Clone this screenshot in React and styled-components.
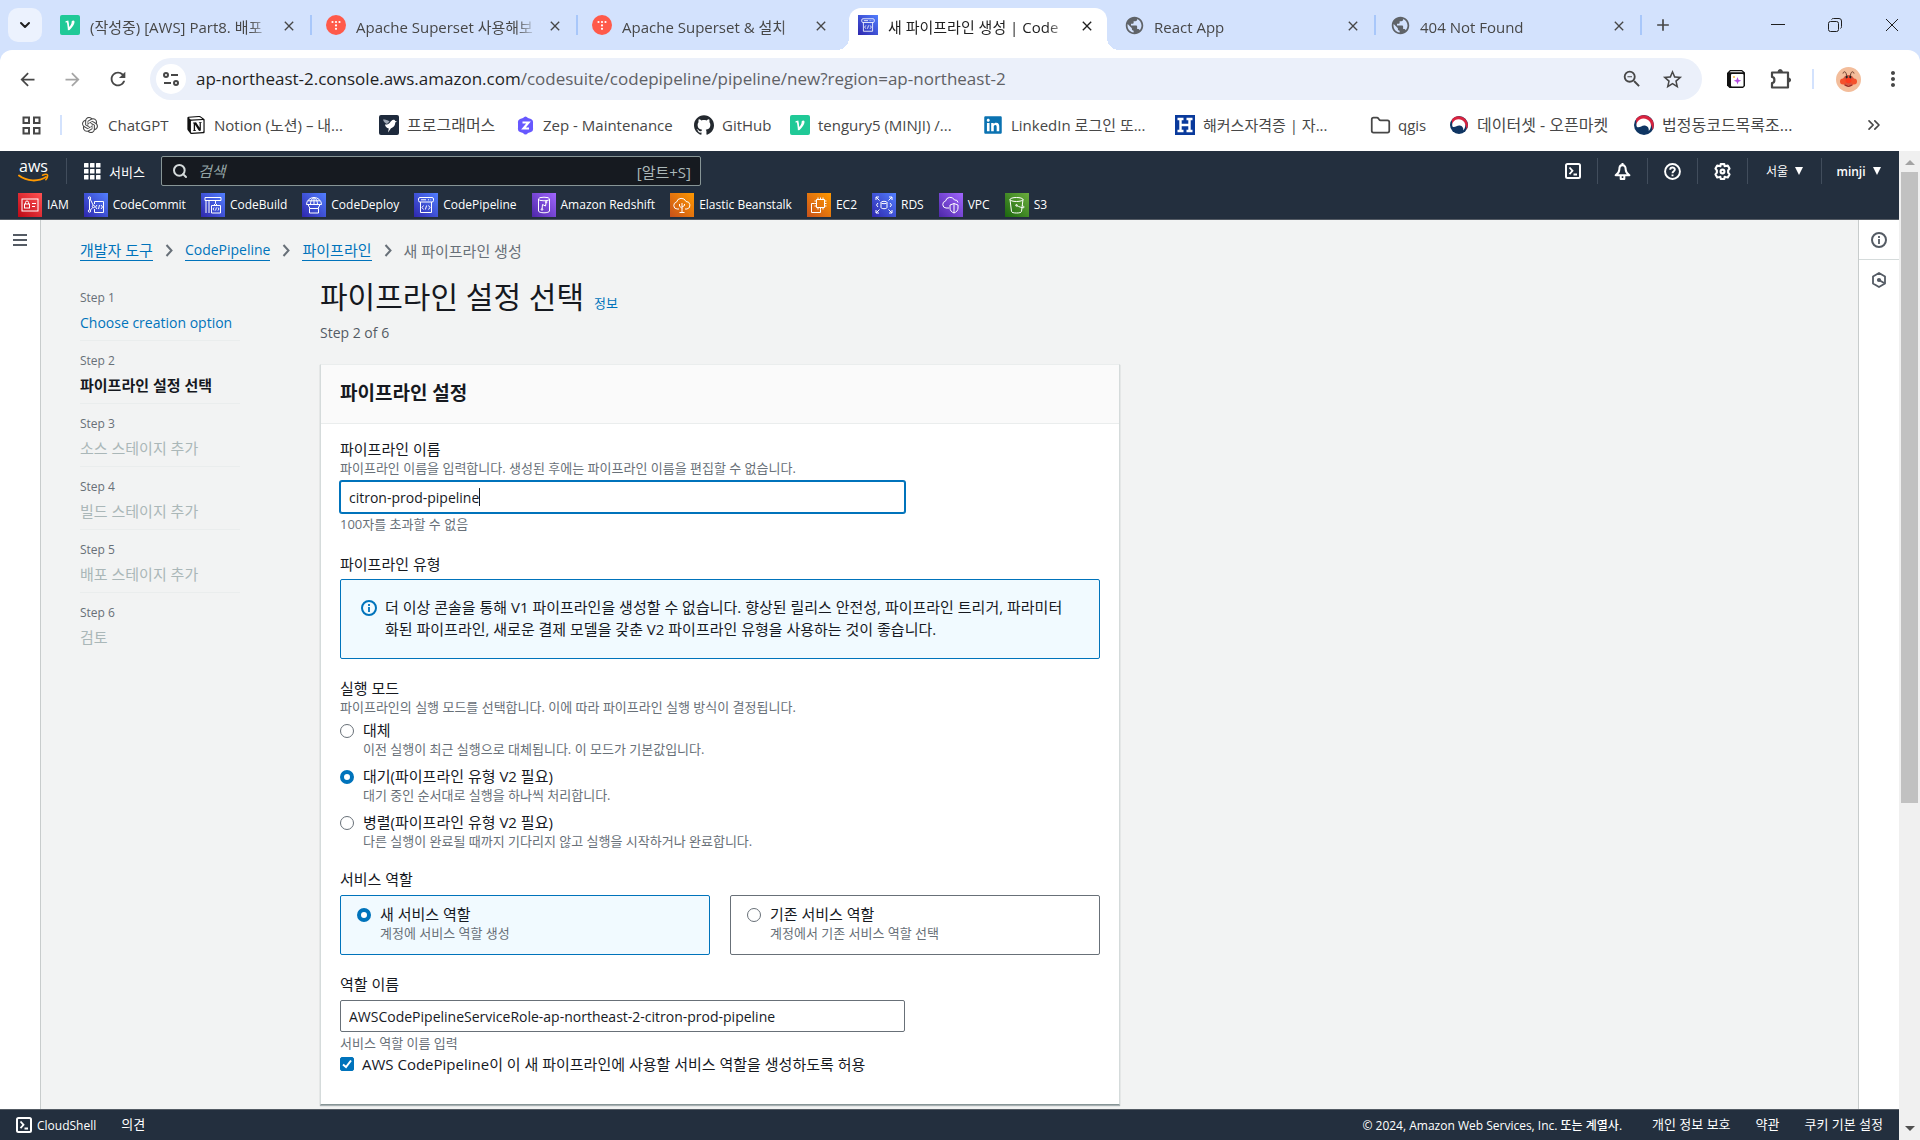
import React, { useState } from "react";
import styled, { createGlobalStyle, css } from "styled-components";
import {
  MdArrowBack, MdArrowForward, MdRefresh, MdStarBorder, MdZoomOut, MdMoreVert,
  MdPublic, MdClose, MdAdd,
} from "react-icons/md";
import { SiOpenai, SiNotion, SiGithub } from "react-icons/si";
import { FaLinkedin } from "react-icons/fa";
import { ChevronDown, ChevronsRight, Folder, Search } from "lucide-react";

const GlobalStyle = createGlobalStyle`
  *, *::before, *::after { box-sizing: border-box; }
  html, body { margin: 0; }
  body {
    font-family: "Open Sans", "Noto Sans CJK KR", sans-serif;
    font-size: 14px;
    color: #16191f;
    background: #f2f3f3;
  }
  button, input { font-family: inherit; }
  button { border: 0; padding: 0; background: none; cursor: pointer; }
  a { text-decoration: none; }
  h1, h2, p, ol, ul, fieldset, legend { margin: 0; padding: 0; border: 0; }
  ol, ul { list-style: none; }
  svg { display: block; flex: none; }
`;

const Window = styled.div`
  display: flex;
  flex-direction: column;
  height: 100vh;
  overflow: hidden;
`;

/* ---------- Browser tabs ---------- */

const TabStrip = styled.header`
  display: flex;
  align-items: center;
  height: 50px;
  flex: none;
  background: #d3e2fd;
  padding-left: 8px;
`;

const TabSearch = styled.button`
  display: grid;
  place-items: center;
  width: 34px;
  height: 34px;
  margin-right: 4px;
  border-radius: 10px;
  background: #ecf2fe;
  color: #1f1f1f;
`;

const Tabs = styled.nav`
  display: flex;
  align-self: stretch;
`;

const Tab = styled.div`
  position: relative;
  display: flex;
  align-items: center;
  gap: 10px;
  width: 266px;
  padding: 0 17px 0 14px;
  color: #474747;
  ${(p) =>
    !p.$active && !p.$beforeActive &&
    css`
      &::after {
        content: "";
        position: absolute;
        right: 0;
        top: 15px;
        width: 2px;
        height: 20px;
        background: #a8c7fa;
      }
    `}
  ${(p) =>
    p.$active &&
    css`
      color: #1f1f1f;
      &::before {
        content: "";
        position: absolute;
        inset: 8px 3px 0 5px;
        background: #fff;
        border-radius: 12px 12px 0 0;
      }
    `}
`;

const TabFoot = styled.span`
  position: absolute;
  bottom: 0;
  width: 12px;
  height: 12px;
  ${(p) => (p.$right ? "right: -9px;" : "left: -7px;")}
  background: radial-gradient(
    circle at ${(p) => (p.$right ? "100%" : "0")} 0,
    #d3e2fd 12px,
    #fff 12px
  );
`;

const TabTitle = styled.span`
  position: relative;
  flex: 1;
  font-size: 15px;
  line-height: 24px;
  padding-top: 3px;
  white-space: nowrap;
  overflow: hidden;
  mask-image: linear-gradient(to right, #000 88%, transparent 100%);
`;

const TabIcon = styled.span`
  position: relative;
  display: grid;
  place-items: center;
  width: 20px;
  color: #5f6368;
`;

const TabClose = styled.button`
  position: relative;
  display: grid;
  place-items: center;
  width: 14px;
  height: 14px;
  color: inherit;
`;

const NewTab = styled.button`
  display: grid;
  place-items: center;
  width: 42px;
  color: #474747;
`;

const WindowButtons = styled.div`
  display: flex;
  align-self: stretch;
  margin-left: auto;
`;

const WindowButton = styled.button`
  display: grid;
  place-items: center;
  width: 57px;
`;

/* ---------- Address bar ---------- */

const ToolbarBack = styled.div`
  background: #d3e2fd;
  flex: none;
`;

const Toolbar = styled.div`
  display: flex;
  align-items: center;
  height: 58px;
  padding: 0 15px;
  background: #fff;
  border-radius: 12px 12px 0 0;
  color: #474747;
`;

const IconButton = styled.button`
  display: grid;
  place-items: center;
  width: ${(p) => p.$w || 45}px;
  height: 32px;
  color: ${(p) => (p.$faded ? "#a5a5a5" : "#474747")};
`;

const NavButtons = styled.div`
  display: flex;
  margin-left: -10px;
`;

const ProfileButtons = styled.div`
  display: flex;
  gap: 19px;
`;

const AddressPill = styled.div`
  display: flex;
  align-items: center;
  flex: 1;
  height: 42px;
  margin-left: 10px;
  margin-right: 16px;
  padding: 0 10px 0 6px;
  border-radius: 21px;
  background: #ebf0fa;
`;

const SiteInfo = styled.button`
  display: grid;
  place-items: center;
  width: 30px;
  height: 30px;
  border-radius: 50%;
  background: #fff;
  color: #474747;
`;

const Url = styled.span`
  flex: 1;
  margin-left: 10px;
  font-size: 17px;
  line-height: 26px;
  color: #5f6165;
  b { font-weight: 400; color: #1f1f1f; }
`;

const Divider = styled.span`
  flex: none;
  width: 2px;
  height: 20px;
  margin: 0 ${(p) => p.$mr || 20}px 0 ${(p) => p.$ml || 20}px;
  background: #d3e2fd;
`;

/* ---------- Bookmarks ---------- */

const Bookmarks = styled.nav`
  display: flex;
  align-items: center;
  flex: none;
  height: 43px;
  padding: 0 36px 9px 22px;
  background: #fff;
  color: #474747;
`;

const Bookmark = styled.a`
  display: flex;
  align-items: center;
  gap: 8px;
  width: ${(p) => p.$w}px;
  flex: none;
  font-size: ${(p) => (p.$korean ? 16 : 15)}px;
  line-height: 22px;
  white-space: nowrap;
  color: #474747;
`;

const BookmarkIcon = styled.span`
  display: grid;
  place-items: center;
  width: 20px;
`;

const More = styled.button`
  margin-left: auto;
  color: #474747;
`;

/* ---------- AWS console ---------- */

const Page = styled.div`
  display: flex;
  flex: 1;
  min-height: 0;
`;

const Console = styled.div`
  display: flex;
  flex-direction: column;
  flex: 1;
  min-width: 0;
`;

const Scrollbar = styled.div`
  display: flex;
  flex-direction: column;
  align-items: center;
  justify-content: space-between;
  width: 21px;
  background: #f0f0f0;
  padding: 9px 0;
`;

const Thumb = styled.div`
  width: 17px;
  flex: 0 1 631px;
  margin: 7px 0 auto;
  background: #c1c1c1;
`;

const Arrow = styled.span`
  border: 5px solid transparent;
  ${(p) =>
    p.$down
      ? "border-top-color: #505050; border-bottom-width: 0;"
      : "border-bottom-color: #a3a3a3; border-top-width: 0;"}
`;

const ConsoleHeader = styled.header`
  flex: none;
  background: #232f3e;
  border-bottom: 1px solid #545b64;
  color: #fff;
`;

const HeaderRow = styled.div`
  display: flex;
  align-items: center;
  height: 40px;
  padding-right: 4px;
  padding-left: 18px;
`;

const HomeLink = styled.a`
  margin-right: 17px;
`;

const HeaderLine = styled.span`
  width: 1px;
  height: 26px;
  background: #414d5c;
`;

const ServicesButton = styled.button`
  display: flex;
  align-items: center;
  gap: 8px;
  width: 94px;
  padding-left: 17px;
  color: #fff;
  font-size: 13px;
  white-space: nowrap;
`;

const SearchBox = styled.label`
  display: flex;
  align-items: center;
  width: 540px;
  height: 30px;
  margin-right: auto;
  padding: 0 9px 0 10px;
  border: 1px solid #879596;
  border-radius: 2px;
  background: #161a20;
  color: #d5dbdb;
  font-size: 14px;
`;

const SearchInput = styled.input`
  flex: 1;
  min-width: 0;
  margin-left: 10px;
  padding: 0;
  border: 0;
  outline: 0;
  background: none;
  color: #fff;
  font-size: 15px;
  &::placeholder { color: #95a5a6; font-style: italic; opacity: 1; }
`;

const Shortcut = styled.span`
  color: #aab7b8;
  font-size: 15px;
`;

const HeaderButton = styled.button`
  display: flex;
  align-items: center;
  justify-content: center;
  gap: 7px;
  width: ${(p) => p.$w || 49}px;
  color: #fff;
  font-size: 12px;
  font-weight: ${(p) => (p.$plain ? 400 : 600)};
  white-space: nowrap;
`;

const Caret = styled.span`
  border: 4px solid transparent;
  border-top: 8px solid #fff;
  border-bottom: 0;
`;

const Favorites = styled.nav`
  display: flex;
  align-items: center;
  gap: 15px;
  height: 28px;
  padding: 0 18px 1px;
`;

const Favorite = styled.a`
  display: flex;
  align-items: center;
  gap: 5px;
  color: #fff;
  font-size: 12px;
  font-weight: 500;
  line-height: 18px;
  white-space: nowrap;
`;

const Body = styled.div`
  display: flex;
  flex: 1;
  min-height: 0;
`;

const SideRail = styled.aside`
  flex: none;
  width: 41px;
  background: #fff;
  color: #545b64;
  border: 0 solid #c8cccc;
  border-width: ${(p) => (p.$right ? "0 0 0 1px" : "0 1px 0 0")};
`;

const RailButton = styled.button`
  display: grid;
  place-items: center;
  width: 100%;
  height: 40px;
  color: #545b64;
  border-bottom: ${(p) => (p.$line ? "1px solid #d5dbdb" : 0)};
`;

const Main = styled.main`
  flex: 1;
  min-width: 0;
  padding: 19px 40px 0 39px;
  overflow: hidden;
  background: #f2f3f3;
`;

const Breadcrumbs = styled.ol`
  display: flex;
  align-items: center;
  gap: 12px;
  height: 22px;
  color: #687078;
  font-size: 15px;
  li { display: flex; align-items: center; gap: 12px; }
`;

const Crumb = styled.a`
  font-size: ${(p) => (p.$latin ? 14 : 15)}px;
  line-height: 20px;
  color: #0073bb;
  border-bottom: 1px solid #0073bb;
`;

const Wizard = styled.div`
  display: grid;
  grid-template-columns: 160px minmax(0, 800px);
  column-gap: 80px;
  margin-top: 16px;
`;

const Steps = styled.ol`
  padding-top: 11px;
`;

const Step = styled.li`
  height: 63px;
  padding-top: 10px;
  &:not(:last-child) { border-bottom: 1px solid #eaeded; }
  &:first-child { height: 53px; padding-top: 0; }
  small {
    display: block;
    font-size: 12px;
    line-height: 20px;
    color: #687078;
  }
`;

const StepName = styled.span`
  display: block;
  margin-top: ${(p) => (p.$latin ? 4 : 3)}px;
  font-size: ${(p) => (p.$latin ? 14 : 15)}px;
  line-height: 22px;
  font-weight: ${(p) => (p.$current ? 700 : 400)};
  color: ${(p) => (p.$current ? "#16191f" : "#aab7b8")};
  white-space: nowrap;
  a { color: #0073bb; }
`;

const TitleRow = styled.div`
  display: flex;
  align-items: baseline;
  gap: 10px;
`;

const Title = styled.h1`
  font-size: 30px;
  line-height: 40px;
  font-weight: 400;
`;

const InfoLink = styled.a`
  font-size: 13px;
  color: #0073bb;
`;

const StepCount = styled.p`
  margin-top: 5px;
  font-size: 14px;
  line-height: 22px;
  color: #545b64;
`;

const Panel = styled.section`
  margin-top: 20px;
  background: #fff;
  border: 1px solid #d5dbdb;
  border-top-color: #eaeded;
  border-bottom-color: #879596;
  box-shadow: 0 1px 1px rgba(0, 28, 36, 0.3);
`;

const PanelTitle = styled.h2`
  height: 59px;
  padding: 14px 19px;
  background: #fafafa;
  border-bottom: 1px solid #eaeded;
  font-size: 19px;
  line-height: 28px;
  font-weight: 700;
`;

const Form = styled.form`
  display: flex;
  flex-direction: column;
  gap: 19px;
  padding: 15px 19px 30px;
`;

const Group = styled.fieldset`
  min-width: 0;
`;

const Label = styled.label`
  display: block;
  font-size: 15px;
  line-height: 20px;
`;

const Hint = styled.span`
  display: block;
  font-size: 13px;
  line-height: ${(p) => (p.$tall ? 22 : 18)}px;
  color: #687078;
`;

const InputWrap = styled.div`
  position: relative;
  width: 565px;
  max-width: 100%;
  margin-top: 4px;
  ${Label} + & { margin-top: 6px; }
`;

const TextInput = styled.input`
  display: block;
  width: 100%;
  height: 32px;
  padding: 0 8px;
  border: 1px solid ${(p) => (p.$focused ? "#0073bb" : "#687078")};
  border-radius: 2px;
  outline: 0;
  box-shadow: ${(p) => (p.$focused ? "0 0 0 1px #0073bb" : "none")};
  font-size: 14px;
  color: #16191f;
  background: #fff;
`;

const TextCursor = styled.span`
  position: absolute;
  left: 9px;
  top: 7px;
  height: 18px;
  font-size: 14px;
  line-height: 18px;
  color: transparent;
  border-right: 1px solid #16191f;
  pointer-events: none;
  &::before { content: attr(data-value); }
`;

const Alert = styled.div`
  display: flex;
  gap: 8px;
  height: 80px;
  margin-top: 5px;
  padding: 16px 20px;
  border: 1px solid #0073bb;
  border-radius: 2px;
  background: #f1faff;
  font-size: 15px;
  line-height: 22px;
  svg { margin-top: 4px; color: #0073bb; }
`;

const Options = styled.div`
  display: flex;
  flex-direction: column;
  gap: 8px;
  margin-top: 4px;
`;

const Choice = styled.label`
  display: grid;
  grid-template-columns: 14px 1fr;
  column-gap: 9px;
  font-size: 15px;
  line-height: 20px;
`;

const Radio = styled.input`
  appearance: none;
  width: 14px;
  height: 14px;
  margin: 4px 0 0;
  border: 1px solid #687078;
  border-radius: 50%;
  background: #fff;
  &:checked { border: 4px solid #0073bb; }
`;

const Tiles = styled.div`
  display: grid;
  grid-template-columns: 1fr 1fr;
  gap: 20px;
  margin-top: 6px;
`;

const Tile = styled.div`
  height: 60px;
  padding: 8px 16px;
  border: 1px solid ${(p) => (p.$on ? "#0073bb" : "#687078")};
  border-radius: 2px;
  background: ${(p) => (p.$on ? "#f1faff" : "#fff")};
`;

const Check = styled.label`
  display: flex;
  align-items: center;
  gap: 8px;
  font-size: 15px;
  line-height: 20px;
`;

const Checkbox = styled.input`
  appearance: none;
  width: 14px;
  height: 14px;
  margin: 0;
  border-radius: 2px;
  border: 1px solid #687078;
  &:checked {
    border-color: #0073bb;
    background: #0073bb
      url("data:image/svg+xml,%3Csvg xmlns='http://www.w3.org/2000/svg' viewBox='0 0 12 12'%3E%3Cpath d='M2 6.5 5 9l5-6.5' fill='none' stroke='%23fff' stroke-width='2'/%3E%3C/svg%3E");
  }
`;

const Footer = styled.footer`
  display: flex;
  align-items: center;
  flex: none;
  height: 31px;
  padding: 0 16px;
  gap: 25px;
  background: #232f3e;
  border-top: 1px solid #545b64;
  color: #fff;
  font-size: 12px;
  white-space: nowrap;
  a { color: #fff; font-size: 13px; line-height: 18px; padding-bottom: 2px; }
`;

const ShellButton = styled.button`
  display: flex;
  align-items: center;
  gap: 5px;
  color: #fff;
  font-size: 12px;
  font-weight: 500;
`;

const Copyright = styled.span`
  margin-left: auto;
  margin-right: 5px;
  font-weight: 500;
`;

/* ---------- Drawings ---------- */

const VelogIcon = () => (
  <svg width="20" height="20" viewBox="0 0 20 20">
    <rect width="20" height="20" rx="2" fill="#20c997" />
    <path d="M5.6 6.3 8.3 5.5c.5 1.900.8 4.200.9 6.600 1.600-1.900 2.400-3.500 2.400-4.700 0-1.200.600-1.900 1.600-1.900 2.700 0 1.300 5-3.600 9.500L7.900 15.200c-.2-3.400-.6-5.900-1.200-7.900l-1.300.1z" fill="#fff" />
  </svg>
);

const TistoryIcon = () => (
  <svg width="20" height="20" viewBox="0 0 20 20">
    <circle cx="10" cy="10" r="10" fill="#ff5a4a" />
    <g fill="#fff">
      <circle cx="6.500" cy="7" r="1.100" /><circle cx="10" cy="7" r="1.100" /><circle cx="13.500" cy="7" r="1.100" />
      <circle cx="10" cy="10.400" r="1.100" /><circle cx="10" cy="13.800" r="1.100" />
    </g>
  </svg>
);

const GLYPHS = {
  iam: (
    <>
      <rect x="4" y="6" width="16" height="12" />
      <rect x="6.500" y="11" width="5" height="4" />
      <path d="M7.500 11V9.500a1.500 1.500 0 0 1 3 0V11M14 10.500h4M14 13.500h3" />
    </>
  ),
  commit: (
    <>
      <path d="M10.500 11V8.500h9v11h-9V16" />
      <path d="m13 12-1.500 2 1.500 2M17 12l1.500 2-1.500 2M15.500 12l-1 4" />
      <circle cx="5.500" cy="5" r="1.200" /><circle cx="5.500" cy="18" r="1.200" /><circle cx="9.500" cy="13.500" r="1.200" />
      <path d="M5.500 6.200v10.600M6.200 6l3 6.300M6.300 17.200l2.400-2.700" />
    </>
  ),
  build: (
    <>
      <path d="M4 4.500h16v3H4zM5 7.500V20M8 7.500V20M14.500 7.500v3" />
      <path d="M10.500 12.500h9V20h-9zM12.500 12.500l2-2 2 2" />
      <path d="m13 14.500-1 1.500 1 1.500M17 14.500l1 1.500-1 1.500M15.400 14.500l-.8 3" />
    </>
  ),
  deploy: (
    <>
      <path d="M4.500 11.500a7.500 7 0 0 1 15 0zM8.500 11.500c0-3 1-6 3.500-7 2.500 1 3.500 4 3.500 7M12 4.500v7M6 7.800h12" />
      <path d="m6 11.500 2 4M18 11.500l-2 4M7.500 15.500h9V20h-9z" />
    </>
  ),
  pipeline: (
    <>
      <rect x="4.500" y="4.500" width="15" height="4.500" rx="1.500" />
      <path d="M6.500 9v10.500h11V9M7 6.800h5M14 6.800h1M16.500 6.800h.6" />
      <path d="m9.500 12.500-1.500 2 1.500 2M14.500 12.500l1.500 2-1.500 2M12.600 12.500l-1.200 4" />
    </>
  ),
  redshift: (
    <>
      <ellipse cx="12" cy="6" rx="5.500" ry="1.800" />
      <path d="M6.500 6v12c0 1 2.500 1.800 5.500 1.800s5.500-.8 5.500-1.800V6M10 16.500l.5-5 3 1.500.7-4.500" />
      <circle cx="10" cy="16.500" r=".8" /><circle cx="14.200" cy="9" r=".8" />
    </>
  ),
  beanstalk: (
    <>
      <path d="M9 16H7a3.500 3.500 0 0 1-.5-6.900A5 5 0 0 1 16 8.500 3.800 3.800 0 0 1 17 16h-2" />
      <path d="M12 10v9M12 15.500 9.500 13v-2M12 14l2.500-1.500V11M9.500 19.500h5" />
    </>
  ),
  ec2: (
    <>
      <path d="M9.500 6.500h8v8h-8zM11 4.500v2M13.500 4.500v2M16 4.500v2M11 14.500v2M13.500 14.500v2M16 14.500v2M7.500 8h2M7.500 10.500h2M7.500 13h2M17.500 8h2M17.500 10.500h2M17.500 13h2" />
      <path d="M7.500 10.500h-3v9h9v-3" />
    </>
  ),
  rds: (
    <>
      <path d="M4 7V4h3M4 4l3.500 3.500M17 4h3v3M20 4l-3.500 3.500M4 17v3h3M4 20l3.500-3.500M17 20h3v-3M20 20l-3.500-3.500" />
      <ellipse cx="12" cy="9.500" rx="3" ry="1.200" />
      <path d="M9 9.500v5c0 .7 1.300 1.200 3 1.200s3-.5 3-1.200v-5M6 10l-1.500 2L6 14M18 10l1.500 2-1.500 2" />
    </>
  ),
  vpc: (
    <>
      <path d="M10 15H7a3.500 3.500 0 0 1-.5-6.900A4.800 4.800 0 0 1 15.500 7a3 3 0 0 1 3.500 2.500" />
      <path d="m15 10.500 4 1.500v3c0 2.500-1.500 4-4 5-2.500-1-4-2.500-4-5v-3zM15 10.500V20" />
    </>
  ),
  s3: (
    <>
      <ellipse cx="11.500" cy="6.500" rx="6.500" ry="2" />
      <path d="m5 6.500 1.500 12c.3 1 2.300 1.500 5 1.500s4.700-.5 5-1.500L18 6.500M11.500 12.500c3 1.500 7.500 3.200 7.500 1.700 0-.8-1-1.500-2-2" />
      <circle cx="11.500" cy="12.300" r=".8" />
    </>
  ),
};

const GRADIENTS = {
  red: ["#bd0816", "#ff5252"],
  blue: ["#2e27ad", "#527fff"],
  purple: ["#4d27a8", "#a166ff"],
  orange: ["#c8511b", "#ff9900"],
  green: ["#1b660f", "#6cae3e"],
};

const ServiceIcon = ({ glyph, tone, size = 24 }) => {
  const id = `g-${glyph}-${size}`;
  return (
    <svg width={size} height={size} viewBox="0 0 24 24">
      <defs>
        <linearGradient id={id} x1="0" y1="1" x2="1" y2="0">
          <stop offset="0" stopColor={GRADIENTS[tone][0]} />
          <stop offset="1" stopColor={GRADIENTS[tone][1]} />
        </linearGradient>
      </defs>
      <rect width="24" height="24" fill={`url(#${id})`} />
      <g fill="none" stroke="#fff" strokeWidth="1">{GLYPHS[glyph]}</g>
    </svg>
  );
};

const AwsLogo = () => (
  <svg width="31" height="30" viewBox="0 -5 31 30">
    <text x="15.500" y="11" textAnchor="middle" fontSize="16" fontWeight="500" fill="#fff" fontFamily="Open Sans">aws</text>
    <path d="M1 14.500c8 6 19 6.500 27 1.500" fill="none" stroke="#ff9900" strokeWidth="2" strokeLinecap="round" />
    <path d="M24.500 14.200c2-.8 4.500-.9 5-.3s-.2 3.200-1.700 4.900" fill="none" stroke="#ff9900" strokeWidth="1.500" strokeLinecap="round" />
  </svg>
);

const ShellIcon = ({ size = 16 }) => (
  <svg width={size} height={size} viewBox="0 0 16 16" fill="none" stroke="currentColor" strokeWidth="2">
    <rect x="1" y="1" width="14" height="14" rx="1.500" />
    <path d="m4.500 4.500 3 3.300-3 3.300M8.500 11.500H12" strokeWidth="1.800" />
  </svg>
);

const BellIcon = () => (
  <svg width="17" height="17" viewBox="0 0 16 16" fill="none" stroke="currentColor" strokeWidth="1.900" strokeLinejoin="round">
    <path d="M8 0v2M8 2C5.500 2 5 4.500 5 6c0 2.500-1.500 4-3.500 5.500h13C12.500 10 11 8.500 11 6c0-1.500-.5-4-3-4zM6.300 12v3h3.400v-3" />
  </svg>
);

const HelpIcon = () => (
  <svg width="17" height="17" viewBox="0 0 16 16" fill="none" stroke="currentColor" strokeWidth="1.800">
    <circle cx="8" cy="8" r="7" />
    <path d="M5.800 6.300C5.900 3.500 10.200 3.600 10.200 6.200 10.200 7.800 8 7.700 8 9.700M8 10.800v1.700" />
  </svg>
);

const GearIcon = () => (
  <svg width="17" height="17" viewBox="0 0 16 16" fill="none" stroke="currentColor" strokeWidth="2" strokeLinejoin="round">
    <path d="M6.300 1h3.400l.3 2 1-.2 2-.3 1.600 2.700L13.300 7v2l1.300 1.800-1.600 2.700-2-.3-1-.2-.3 2H6.300L6 13l-1 .2-2 .3-1.600-2.700L2.700 9V7L1.400 5.200 3 2.500l2 .3 1 .2z" />
    <circle cx="8" cy="8" r="1.800" />
  </svg>
);

const InfoIcon = () => (
  <svg width="16" height="16" viewBox="0 0 16 16" fill="none" stroke="currentColor" strokeWidth="2">
    <circle cx="8" cy="8" r="7" />
    <path d="M8 7v5M8 4v2" strokeWidth="1.800" />
  </svg>
);

const HexIcon = () => (
  <svg width="16" height="16" viewBox="0 0 16 16" fill="none" stroke="currentColor" strokeWidth="1.800" strokeLinejoin="round">
    <path d="m8 1 6 3.500v7L8 15l-6-3.500v-7z" />
    <path d="m8 8 5.500 3.300" /><circle cx="8" cy="8" r="1.200" fill="currentColor" />
  </svg>
);

const CrumbArrow = () => (
  <svg width="8" height="13" viewBox="0 0 8 13" fill="none" stroke="#687078" strokeWidth="2">
    <path d="m1.500 1 5 5.500-5 5.500" />
  </svg>
);

const DotsIcon = () => (
  <svg width="17" height="17" viewBox="0 0 17 17" fill="currentColor">
    {[0, 6, 12].map((y) => [0, 6, 12].map((x) => <rect key={`${x}-${y}`} x={x} y={y} width="4.500" height="4.500" rx=".5" />))}
  </svg>
);

const AppsIcon = () => (
  <svg width="19" height="19" viewBox="0 0 19 19" fill="none" stroke="#474747" strokeWidth="2">
    <path d="M1.500 1.500h5.500v5.500H1.500zM12 1.500h5.500v5.500H12zM1.500 12h5.500v5.500H1.500zM12 12h5.500v5.500H12z" />
  </svg>
);

const TuneIcon = () => (
  <svg width="18" height="18" viewBox="0 0 18 18" fill="none" stroke="currentColor" strokeWidth="2">
    <circle cx="4" cy="5" r="2" /><path d="M9 5h7M2 13h7" /><circle cx="14" cy="13" r="2" />
  </svg>
);

const CrossIcon = () => (
  <svg width="14" height="14" viewBox="0 0 14 14" stroke="#1f1f1f" fill="none"><path d="m1 1 12 12M13 1 1 13" /></svg>
);

const NotionBox = () => (
  <svg width="20" height="20" viewBox="0 0 20 20">
    <path d="m1 4 3-3h12l3 2.500V17l-2 2H3.500L1 16.500z" fill="#111" />
    <path d="m3.500 3.300 1.200-1h10.800l1.500 1z" fill="#fff" />
    <rect x="5" y="5" width="12.500" height="12.500" rx="1" fill="#fff" />
    <path d="m11.500 8 1 2.800 2.800 1-2.800 1-1 2.800-1-2.800-2.800-1 2.800-1z" fill="#b44be0" />
    <circle cx="8" cy="8" r="1" fill="#f4b740" />
  </svg>
);

const PuzzleIcon = () => (
  <svg width="22" height="22" viewBox="0 0 22 22" fill="none" stroke="currentColor" strokeWidth="2.200" strokeLinejoin="round">
    <path d="M2 4.500h16v15H2v-4.300c3.200-.4 3.200-5.900 0-6.300z" />
    <path d="M8 3.800a2.200 2.200 0 0 1 4.400 0zM18.600 10a2 2 0 0 1 0 4z" fill="currentColor" strokeWidth="1" />
  </svg>
);

const Avatar = () => (
  <svg width="25" height="25" viewBox="0 0 25 25">
    <circle cx="12.500" cy="12.500" r="12.500" fill="#f3bd9b" />
    <path d="M10.500 8C10 4 7.500 4 7 6.500M14.500 8c.5-4 3-4 3.500-1.500" fill="none" stroke="#6b3b2a" />
    <circle cx="12.500" cy="14" r="6" fill="#d9573f" />
    <circle cx="7" cy="14.500" r="3" fill="#f4512c" /><circle cx="18" cy="14.500" r="3" fill="#f4512c" />
    <ellipse cx="10.700" cy="10" rx="1" ry="1.800" fill="#222" /><ellipse cx="14.300" cy="10" rx="1" ry="1.800" fill="#222" />
    <circle cx="12.500" cy="13.500" r="2.800" fill="#ff3b1f" />
    <path d="M9 18q3.500 3 7 0" stroke="#842a2a" fill="none" />
  </svg>
);

const ProgrammersIcon = () => (
  <svg width="20" height="20" viewBox="0 0 20 20">
    <rect width="20" height="20" rx="2" fill="#1e2a3c" />
    <path d="M6 9.500c2 .3 3.500-.3 5-2 1-1.200 2-2.700 3.500-2.700 1 0 1.500.5 1.700 1.200l1.800.5-1.800 1c0 3.500-2.200 5.200-4.200 5.700L9 17.500l.8-4C7.500 13 6.300 11.500 6 9.500z" fill="#fff" />
    <path d="M4 4.500c2.500 0 4.500.5 6.500 2L8 9C6 8 4.500 6.500 4 4.500z" fill="#9fa8b5" />
  </svg>
);

const ZepIcon = () => (
  <svg width="17" height="19" viewBox="0 0 17 19">
    <path d="M6 2q2.500-3 5 0l3 1q2.500 1 2 4v5q.5 3-2 4l-3 1q-2.500 3-5 0l-3-1Q.5 15 1 12V7Q.5 4 3 3z" fill="#6758ff" />
    <path d="M5.500 6.500h6l-5 6h5.500" fill="none" stroke="#fff" strokeWidth="2.200" />
  </svg>
);

const HackersIcon = () => (
  <svg width="20" height="20" viewBox="0 0 20 20">
    <rect width="20" height="20" fill="#0a3a9c" />
    <path d="M2.500 4h6M2.500 16h6M11.500 4h6M11.500 16h6M5.500 4v12M14.500 4v12M5.500 10h9" stroke="#fff" strokeWidth="2.400" />
  </svg>
);

const TaegukIcon = ({ size }) => (
  <svg width={size} height={size} viewBox="0 0 20 20">
    <circle cx="10" cy="10" r="10" fill="#0f3562" />
    <path d="M2 4A10 10 0 0 1 18.500 15.200C18 10 15.500 4.500 10 4.500S3 8 2.500 10z" fill="#d9233f" />
    <path d="M3 7.500C6 2 13 2.500 16 7c1.800 3 1 6.500-1.200 9 .3-3-1-5-3.800-5.500-3-.6-5 2.500-8 1.500-.8-1-.7-3 0-4.500z" fill="#fff" />
  </svg>
);

/* ---------- Data ---------- */

const TABS = [
  { title: "(작성중) [AWS] Part8. 배포", icon: <VelogIcon /> },
  { title: "Apache Superset 사용해보", icon: <TistoryIcon /> },
  { title: "Apache Superset & 설치", icon: <TistoryIcon />, beforeActive: true },
  { title: "새 파이프라인 생성 | Code", icon: <ServiceIcon glyph="pipeline" tone="blue" size={20} />, active: true },
  { title: "React App", icon: <MdPublic size={21} /> },
  { title: "404 Not Found", icon: <MdPublic size={21} /> },
];

const BOOKMARKS = [
  { label: "ChatGPT", w: 106, icon: <SiOpenai size={16} /> },
  { label: "Notion (노션) – 내...", w: 193, icon: <SiNotion size={18} color="#111" /> },
  { label: "프로그래머스", w: 136, icon: <ProgrammersIcon />, korean: true },
  { label: "Zep - Maintenance", w: 179, icon: <ZepIcon /> },
  { label: "GitHub", w: 96, icon: <SiGithub size={20} color="#24292f" /> },
  { label: "tengury5 (MINJI) /...", w: 193, icon: <VelogIcon /> },
  { label: "LinkedIn 로그인 또...", w: 192, icon: <FaLinkedin size={20} color="#0a72b1" /> },
  { label: "해커스자격증 | 자...", w: 195, icon: <HackersIcon /> },
  { label: "qgis", w: 79, icon: <Folder size={21} strokeWidth={2} /> },
  { label: "데이터셋 - 오픈마켓", w: 185, icon: <TaegukIcon size={18} />, korean: true },
  { label: "법정동코드목록조...", w: 170, icon: <TaegukIcon size={20} />, korean: true },
];

const FAVORITES = [
  ["IAM", "iam", "red"],
  ["CodeCommit", "commit", "blue"],
  ["CodeBuild", "build", "blue"],
  ["CodeDeploy", "deploy", "blue"],
  ["CodePipeline", "pipeline", "blue"],
  ["Amazon Redshift", "redshift", "purple"],
  ["Elastic Beanstalk", "beanstalk", "orange"],
  ["EC2", "ec2", "orange"],
  ["RDS", "rds", "blue"],
  ["VPC", "vpc", "purple"],
  ["S3", "s3", "green"],
];

const CRUMBS = [["개발자 도구"], ["CodePipeline", true], ["파이프라인"]];

const STEPS = [
  "Choose creation option",
  "파이프라인 설정 선택",
  "소스 스테이지 추가",
  "빌드 스테이지 추가",
  "배포 스테이지 추가",
  "검토",
];

const MODES = [
  ["대체", "이전 실행이 최근 실행으로 대체됩니다. 이 모드가 기본값입니다."],
  ["대기(파이프라인 유형 V2 필요)", "대기 중인 순서대로 실행을 하나씩 처리합니다."],
  ["병렬(파이프라인 유형 V2 필요)", "다른 실행이 완료될 때까지 기다리지 않고 실행을 시작하거나 완료합니다."],
];

const ROLES = [
  ["새 서비스 역할", "계정에 서비스 역할 생성"],
  ["기존 서비스 역할", "계정에서 기존 서비스 역할 선택"],
];

/* ---------- Sections ---------- */

function Browser() {
  return (
    <>
      <TabStrip>
        <TabSearch aria-label="탭 검색"><ChevronDown size={16} strokeWidth={3} /></TabSearch>
        <Tabs>
          {TABS.map((t, i) => (
            <Tab key={i} $active={t.active} $beforeActive={t.beforeActive}>
              {t.active && (<><TabFoot /><TabFoot $right /></>)}
              <TabIcon>{t.icon}</TabIcon>
              <TabTitle>{t.title}</TabTitle>
              <TabClose aria-label="닫기"><MdClose size={16} /></TabClose>
            </Tab>
          ))}
        </Tabs>
        <NewTab aria-label="새 탭"><MdAdd size={20} /></NewTab>
        <WindowButtons>
          <WindowButton aria-label="최소화">
            <svg width="14" height="14" viewBox="0 0 14 14" stroke="#1f1f1f"><path d="M0 6.500h14" /></svg>
          </WindowButton>
          <WindowButton aria-label="이전 크기로">
            <svg width="14" height="14" viewBox="0 0 14 14" stroke="#1f1f1f" fill="none">
              <rect x=".5" y="3.500" width="10" height="10" rx="2" /><path d="M3.500 1.500q.5-1 2-1H11q2.500 0 2.500 2.500v5.500q0 1.500-1 2" />
            </svg>
          </WindowButton>
          <WindowButton aria-label="창 닫기"><CrossIcon /></WindowButton>
        </WindowButtons>
      </TabStrip>
      <ToolbarBack>
        <Toolbar>
          <NavButtons>
            <IconButton aria-label="뒤로"><MdArrowBack size={21} /></IconButton>
            <IconButton aria-label="앞으로" $faded><MdArrowForward size={21} /></IconButton>
            <IconButton aria-label="새로고침"><MdRefresh size={22} /></IconButton>
          </NavButtons>
          <AddressPill>
            <SiteInfo aria-label="사이트 정보"><TuneIcon /></SiteInfo>
            <Url><b>ap-northeast-2.console.aws.amazon.com</b>/codesuite/codepipeline/pipeline/new?region=ap-northeast-2</Url>
            <IconButton $w={40} aria-label="축소"><MdZoomOut size={22} /></IconButton>
            <IconButton $w={40} aria-label="북마크"><MdStarBorder size={23} /></IconButton>
          </AddressPill>
          <IconButton $w={36} aria-label="Notion"><NotionBox /></IconButton>
          <IconButton $w={54} aria-label="확장 프로그램"><PuzzleIcon /></IconButton>
          <Divider $ml={4} />
          <ProfileButtons>
            <IconButton $w={28} aria-label="프로필"><Avatar /></IconButton>
            <IconButton $w={24} aria-label="메뉴"><MdMoreVert size={24} /></IconButton>
          </ProfileButtons>
        </Toolbar>
      </ToolbarBack>
      <Bookmarks>
        <AppsIcon />
        <Divider $mr={18} $ml={19} />
        {BOOKMARKS.map((b) => (
          <Bookmark key={b.label} href="#" $w={b.w} $korean={b.korean}>
            <BookmarkIcon>{b.icon}</BookmarkIcon>
            {b.label}
          </Bookmark>
        ))}
        <More aria-label="북마크 더보기"><ChevronsRight size={20} /></More>
      </Bookmarks>
    </>
  );
}

function ConsoleTop() {
  return (
    <ConsoleHeader>
      <HeaderRow>
        <HomeLink href="#" aria-label="AWS"><AwsLogo /></HomeLink>
        <HeaderLine />
        <ServicesButton><DotsIcon />서비스</ServicesButton>
        <SearchBox>
          <Search size={16} strokeWidth={3} />
          <SearchInput placeholder="검색" aria-label="검색" />
          <Shortcut>[알트+S]</Shortcut>
        </SearchBox>
        <HeaderButton aria-label="CloudShell"><ShellIcon /></HeaderButton>
        <HeaderLine />
        <HeaderButton aria-label="알림"><BellIcon /></HeaderButton>
        <HeaderLine />
        <HeaderButton aria-label="도움말"><HelpIcon /></HeaderButton>
        <HeaderLine />
        <HeaderButton aria-label="설정"><GearIcon /></HeaderButton>
        <HeaderLine />
        <HeaderButton $w={73} $plain>서울 <Caret /></HeaderButton>
        <HeaderLine />
        <HeaderButton $w={73}>minji <Caret /></HeaderButton>
      </HeaderRow>
      <Favorites>
        {FAVORITES.map(([name, glyph, tone]) => (
          <Favorite key={name} href="#"><ServiceIcon glyph={glyph} tone={tone} />{name}</Favorite>
        ))}
      </Favorites>
    </ConsoleHeader>
  );
}

function Settings() {
  const [name, setName] = useState("citron-prod-pipeline");
  const [role, setRole] = useState("AWSCodePipelineServiceRole-ap-northeast-2-citron-prod-pipeline");
  const [mode, setMode] = useState(1);
  const [roleKind, setRoleKind] = useState(0);
  return (
    <Panel>
      <PanelTitle>파이프라인 설정</PanelTitle>
      <Form>
        <Group as="div">
          <Label htmlFor="name">파이프라인 이름</Label>
          <Hint>파이프라인 이름을 입력합니다. 생성된 후에는 파이프라인 이름을 편집할 수 없습니다.</Hint>
          <InputWrap>
            <TextInput id="name" $focused value={name} onChange={(e) => setName(e.target.value)} />
            <TextCursor data-value={name} aria-hidden="true" />
          </InputWrap>
          <Hint $tall>100자를 초과할 수 없음</Hint>
        </Group>
        <Group as="div">
          <Label as="div">파이프라인 유형</Label>
          <Alert role="note">
            <InfoIcon />
            <p>
              더 이상 콘솔을 통해 V1 파이프라인을 생성할 수 없습니다. 향상된 릴리스 안전성, 파이프라인 트리거, 파라미터<br />
              화된 파이프라인, 새로운 결제 모델을 갖춘 V2 파이프라인 유형을 사용하는 것이 좋습니다.
            </p>
          </Alert>
        </Group>
        <Group>
          <Label as="legend">실행 모드</Label>
          <Hint>파이프라인의 실행 모드를 선택합니다. 이에 따라 파이프라인 실행 방식이 결정됩니다.</Hint>
          <Options>
            {MODES.map(([label, hint], i) => (
              <Choice key={label}>
                <Radio type="radio" name="mode" checked={mode === i} onChange={() => setMode(i)} />
                <span>{label}<Hint>{hint}</Hint></span>
              </Choice>
            ))}
          </Options>
        </Group>
        <Group>
          <Label as="legend">서비스 역할</Label>
          <Tiles>
            {ROLES.map(([label, hint], i) => (
              <Tile key={label} $on={roleKind === i}>
                <Choice>
                  <Radio type="radio" name="role" checked={roleKind === i} onChange={() => setRoleKind(i)} />
                  <span>{label}<Hint>{hint}</Hint></span>
                </Choice>
              </Tile>
            ))}
          </Tiles>
        </Group>
        <Group as="div">
          <Label htmlFor="role">역할 이름</Label>
          <InputWrap>
            <TextInput id="role" value={role} onChange={(e) => setRole(e.target.value)} />
          </InputWrap>
          <Hint $tall>서비스 역할 이름 입력</Hint>
          <Check>
            <Checkbox type="checkbox" defaultChecked />
            AWS CodePipeline이 이 새 파이프라인에 사용할 서비스 역할을 생성하도록 허용
          </Check>
        </Group>
      </Form>
    </Panel>
  );
}

export default function App() {
  return (
    <Window>
      <GlobalStyle />
      <Browser />
      <Page>
        <Console>
          <ConsoleTop />
          <Body>
            <SideRail>
              <RailButton aria-label="탐색 열기">
                <svg width="14" height="12" viewBox="0 0 14 12" stroke="currentColor" strokeWidth="2"><path d="M0 1h14M0 6h14M0 11h14" /></svg>
              </RailButton>
            </SideRail>
            <Main>
              <Breadcrumbs>
                {CRUMBS.map(([c, latin]) => (
                  <li key={c}><Crumb href="#" $latin={latin}>{c}</Crumb><CrumbArrow /></li>
                ))}
                <li>새 파이프라인 생성</li>
              </Breadcrumbs>
              <Wizard>
                <Steps>
                  {STEPS.map((s, i) => (
                    <Step key={s}>
                      <small>Step {i + 1}</small>
                      <StepName $latin={i === 0} $current={i === 1}>{i === 0 ? <a href="#">{s}</a> : s}</StepName>
                    </Step>
                  ))}
                </Steps>
                <div>
                  <TitleRow><Title>파이프라인 설정 선택</Title><InfoLink href="#">정보</InfoLink></TitleRow>
                  <StepCount>Step 2 of 6</StepCount>
                  <Settings />
                </div>
              </Wizard>
            </Main>
            <SideRail $right>
              <RailButton $line aria-label="정보"><InfoIcon /></RailButton>
              <RailButton aria-label="자습서"><HexIcon /></RailButton>
            </SideRail>
          </Body>
          <Footer>
            <ShellButton><ShellIcon />CloudShell</ShellButton>
            <a href="#">의견</a>
            <Copyright>© 2024, Amazon Web Services, Inc. 또는 계열사.</Copyright>
            <a href="#">개인 정보 보호</a>
            <a href="#">약관</a>
            <a href="#">쿠키 기본 설정</a>
          </Footer>
        </Console>
        <Scrollbar><Arrow /><Thumb /><Arrow $down /></Scrollbar>
      </Page>
    </Window>
  );
}
